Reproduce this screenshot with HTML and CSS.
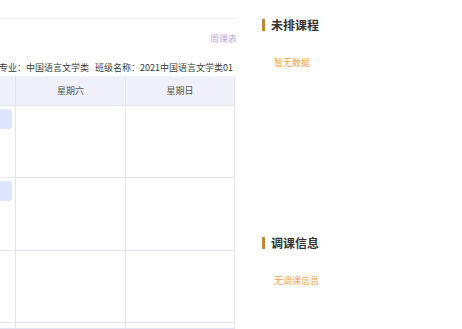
FILE: index.html
```html
<!DOCTYPE html>
<html lang="zh-CN">
<head>
    <meta charset="UTF-8">
    <meta name="viewport" content="width=device-width, initial-scale=1.0">
    <title>课表</title>
    <link rel="stylesheet" href="styles.css">
</head>
<body>
    <div class="schedule">
        <div class="topbar"></div>
        <div class="view-row"><span class="view-link">周课表</span></div>
        <div class="info">专业：中国语言文学类&nbsp;&nbsp;&nbsp;班级名称：2021中国语言文学类01</div>
        <div class="grid">
            <div class="cell head"></div>
            <div class="cell head">星期六</div>
            <div class="cell head">星期日</div>

            <div class="cell"><div class="course"></div></div>
            <div class="cell"></div>
            <div class="cell"></div>

            <div class="cell"><div class="course"></div></div>
            <div class="cell"></div>
            <div class="cell"></div>

            <div class="cell"></div>
            <div class="cell"></div>
            <div class="cell"></div>

            <div class="cell"></div>
            <div class="cell"></div>
            <div class="cell"></div>
        </div>
    </div>

    <div class="side">
        <div class="block first">
            <h3 class="block-title">未排课程</h3>
            <p class="empty">暂无数据</p>
        </div>
        <div class="block">
            <h3 class="block-title">调课信息</h3>
            <p class="empty">无调课信息</p>
        </div>
    </div>
</body>
</html>
```

FILE: styles.css
```css
body {
    margin: 0;
    display: flex;
    height: 329px;
    overflow: hidden;
    font-family: "Noto Sans CJK SC", "Noto Sans", sans-serif;
    background-color: #fff;
    color: #333;
}
.schedule {
    width: 236px;
    flex-shrink: 0;
    overflow: hidden;
}
.topbar {
    height: 18px;
    border-bottom: 1px solid #f0f0f0;
}
.view-row {
    height: 40px;
    display: flex;
    justify-content: flex-end;
    align-items: center;
}
.view-link {
    font-size: 9px;
    color: #c6a3e6;
    margin-right: -1px;
    margin-top: -2px;
}
.info {
    height: 17px;
    line-height: 17px;
    font-size: 9px;
    color: #3a3a3a;
    white-space: nowrap;
    margin-left: -1px;
}
.grid {
    display: grid;
    grid-template-columns: 16px 110px 109px;
    grid-template-rows: 30px 72px 73px 72px 6px;
}
.cell {
    border-right: 1px solid #e2e3f3;
    border-bottom: 1px solid #e2e3f3;
    position: relative;
}
.head {
    background-color: #eff0fa;
    font-size: 9px;
    color: #555;
    display: flex;
    align-items: center;
    justify-content: center;
}
.course {
    position: absolute;
    left: -6px;
    top: 3px;
    width: 18px;
    height: 20px;
    border-radius: 4px;
    background-color: #dde5fc;
}
.side {
    flex: 1;
    padding-left: 26px;
}
.block {
    padding-top: 19px;
}
.block.first {
    height: 199px;
}
.block-title {
    margin: 0;
    height: 12px;
    line-height: 12px;
    font-size: 12px;
    font-weight: bold;
    color: #333;
    border-left: 3px solid #c4863a;
    padding-left: 6px;
}
.empty {
    margin: 26px 0 0 12px;
    font-size: 9px;
    line-height: 12px;
    color: #f4a04c;
}
```
